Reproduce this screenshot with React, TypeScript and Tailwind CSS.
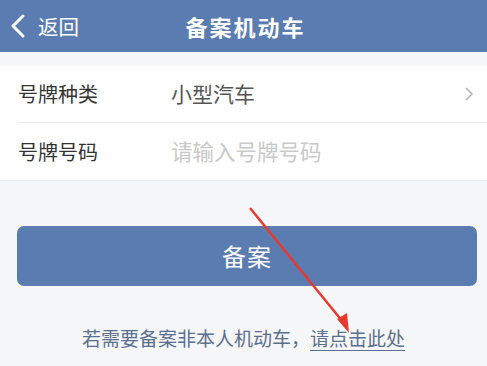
import React from "react";

export default function App() {
  const font = { fontFamily: '"Noto Sans CJK SC", "Noto Sans", sans-serif' };
  return (
    <div className="relative w-[487px] h-[366px] overflow-hidden bg-[#f5f6f8]" style={font}>
      <div className="h-[52px] bg-[#5a7cb1] flex items-center relative">
        <div className="flex items-center pl-[9px] text-white">
          <svg width="17" height="26" viewBox="0 0 17 26" className="mr-[12px]">
            <path d="M14 3 L4 13 L14 23" stroke="#fff" strokeWidth="3" fill="none" strokeLinecap="round" strokeLinejoin="round" />
          </svg>
          <span className="text-[20.5px] leading-none">返回</span>
        </div>
        <div className="absolute inset-0 flex items-center justify-center pointer-events-none">
          <span className="text-white text-[22px] font-bold tracking-[2px] leading-none ml-[4px]">备案机动车</span>
        </div>
      </div>
      <div className="h-[14px]" />
      <div className="bg-white border-b border-[#e9eaec]">
        <div className="ml-[18px] h-[57px] flex items-center border-b border-[#ececec]">
          <span className="w-[153px] text-[20px] text-[#333]">号牌种类</span>
          <span className="flex-1 text-[21px] text-[#555]">小型汽车</span>
          <svg width="12" height="18" viewBox="0 0 12 18" className="mr-[12px]">
            <path d="M3 3 L9 9 L3 15" stroke="#b5b5b5" strokeWidth="1.6" fill="none" />
          </svg>
        </div>
        <div className="ml-[18px] h-[57px] flex items-center">
          <span className="w-[153px] text-[20px] text-[#333]">号牌号码</span>
          <span className="flex-1 text-[21.5px] text-[#c9c9c9]">请输入号牌号码</span>
        </div>
      </div>
      <div className="pl-[17px] pr-[10px] pt-[45px]">
        <div className="h-[60px] rounded-[7px] bg-[#5a7cb1] flex items-center justify-center">
          <span className="text-white text-[24px] tracking-[1px]">备案</span>
        </div>
      </div>
      <div className="pt-[38px] flex justify-center text-[19px] text-[#5b6f8e]">
        <span>若需要备案非本人机动车，</span>
        <span className="underline underline-offset-[4px]">请点击此处</span>
      </div>
      <svg className="absolute left-0 top-0 pointer-events-none" width="487" height="366">
        <line x1="250" y1="208" x2="343" y2="322" stroke="#e8392f" strokeWidth="2.5" />
        <polygon points="349,333 337,319 347,313" fill="#e8392f" />
      </svg>
    </div>
  );
}
